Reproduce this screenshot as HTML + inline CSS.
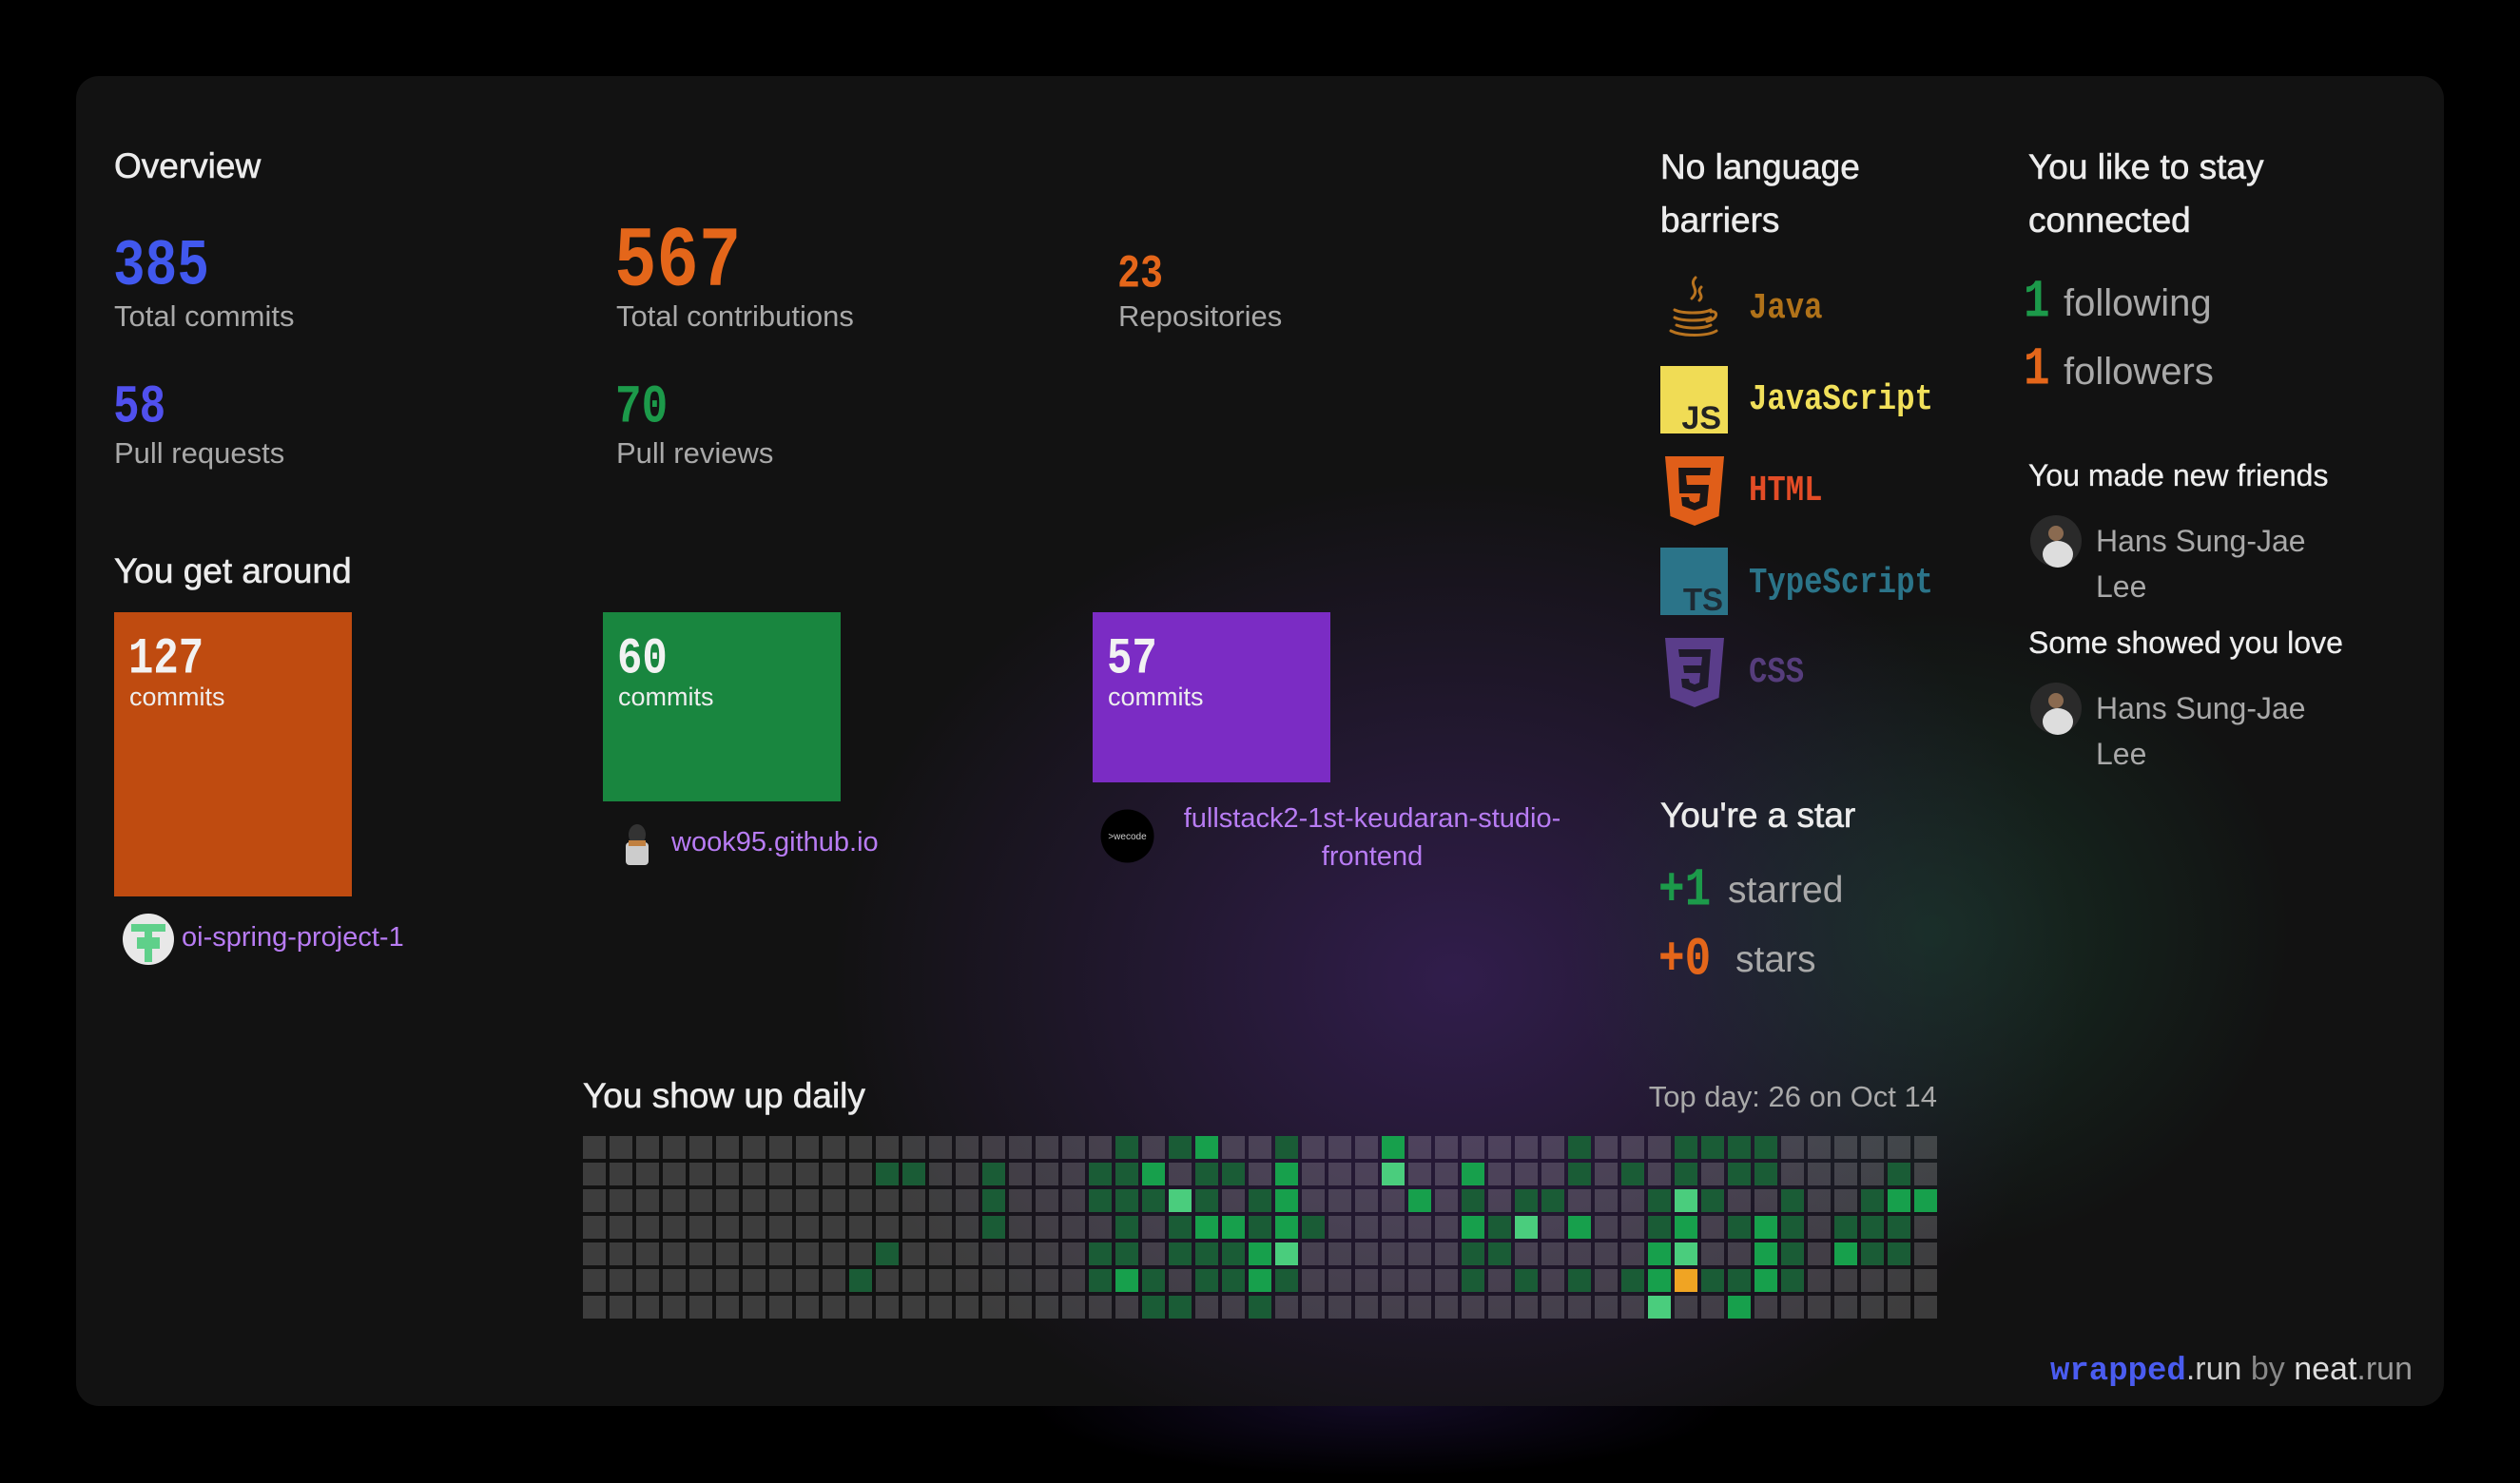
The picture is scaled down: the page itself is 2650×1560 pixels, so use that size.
<!DOCTYPE html>
<html><head><meta charset="utf-8">
<style>
html,body{margin:0;padding:0;width:2650px;height:1560px;overflow:hidden;}
body{background:#000;position:relative;font-family:"Liberation Sans",sans-serif;}
.glowb{position:absolute;left:1050px;top:1420px;width:800px;height:140px;background:radial-gradient(ellipse at 50% 40%,rgba(60,35,120,0.3),rgba(0,0,0,0) 65%);}
.card{position:absolute;left:80px;top:80px;width:2490px;height:1399px;border-radius:24px;background:#121212;overflow:hidden;}
.card .g1{position:absolute;left:700px;top:350px;width:1500px;height:1200px;background:radial-gradient(ellipse at center,rgba(62,34,100,0.7),rgba(18,18,18,0) 62%);}
.card .g2{position:absolute;left:1500px;top:500px;width:900px;height:800px;background:radial-gradient(ellipse at center,rgba(28,72,52,0.5),rgba(18,18,18,0) 60%);}
.t{position:absolute;white-space:nowrap;line-height:1;}
.h{color:#ececec;font-size:37px;-webkit-text-stroke:0.6px #ececec;}
.lbl{color:#a9a9a9;font-size:31px;}
.px{font-family:"Liberation Mono",monospace;font-weight:bold;transform-origin:left 80%;transform:scaleY(1.22);}
.lang{font-family:"Liberation Mono",monospace;font-weight:bold;font-size:38px;transform:scaleX(0.85);transform-origin:left center;}
.bar{position:absolute;}
.repo{color:#b87cf4;font-size:29px;}
.hm rect{width:24px;height:24px;}
.a{fill:#1a5c36}.b{fill:#17a04c}.c{fill:#4acd7d}.d{fill:#f0a423}
</style></head><body>
<div class="glowb"></div>
<div class="card">
<div class="g1"></div><div class="g2"></div>
</div>

<div class="t h" style="left:120px;top:156px;">Overview</div>
<div class="t px" style="left:119px;top:256px;font-size:56px;color:#4158ee;">385</div>
<div class="t lbl" style="left:120px;top:317px;">Total commits</div>
<div class="t px" style="left:646px;top:244px;font-size:74px;color:#e4661a;">567</div>
<div class="t lbl" style="left:648px;top:317px;">Total contributions</div>
<div class="t px" style="left:1175px;top:273px;font-size:40px;color:#e4661a;">23</div>
<div class="t lbl" style="left:1176px;top:317px;">Repositories</div>
<div class="t px" style="left:119px;top:409px;font-size:46px;color:#5050ee;">58</div>
<div class="t lbl" style="left:120px;top:461px;">Pull requests</div>
<div class="t px" style="left:647px;top:409px;font-size:46px;color:#1c9a4a;">70</div>
<div class="t lbl" style="left:648px;top:461px;">Pull reviews</div>

<div class="t h" style="left:120px;top:582px;">You get around</div>
<div class="bar" style="left:120px;top:644px;width:250px;height:299px;background:#bf4b10;"></div>
<div class="t px" style="left:135px;top:675px;font-size:44px;color:#f2f2f2;">127</div>
<div class="t" style="left:136px;top:720px;font-size:27px;color:#eee;">commits</div>
<div class="bar" style="left:634px;top:644px;width:250px;height:199px;background:#19863f;"></div>
<div class="t px" style="left:649px;top:675px;font-size:44px;color:#f2f2f2;">60</div>
<div class="t" style="left:650px;top:720px;font-size:27px;color:#eee;">commits</div>
<div class="bar" style="left:1149px;top:644px;width:250px;height:179px;background:#7b2cc4;"></div>
<div class="t px" style="left:1164px;top:675px;font-size:44px;color:#f2f2f2;">57</div>
<div class="t" style="left:1165px;top:720px;font-size:27px;color:#eee;">commits</div>

<svg style="position:absolute;left:128px;top:960px" width="56" height="56" viewBox="0 0 56 56"><circle cx="28" cy="28" r="27" fill="#e8e8e8"/><path d="M10 12h36v8H32v6h8v12h-8v14h-8V38h-8V26h8v-6H10z" fill="#5fd08a"/></svg>
<div class="t repo" style="left:191px;top:972px;">oi-spring-project-1</div>
<svg style="position:absolute;left:650px;top:866px" width="40" height="46" viewBox="0 0 40 46"><ellipse cx="20" cy="12" rx="9" ry="11" fill="#333"/><rect x="8" y="20" width="24" height="24" rx="4" fill="#ccc"/><rect x="11" y="18" width="18" height="6" fill="#c08040"/></svg>
<div class="t repo" style="left:706px;top:872px;">wook95.github.io</div>
<svg style="position:absolute;left:1157px;top:851px" width="57" height="57" viewBox="0 0 57 57"><circle cx="28.5" cy="28.5" r="28" fill="#000"/><text x="28.5" y="32" font-size="10" fill="#ccc" text-anchor="middle" font-family="Liberation Sans">&gt;wecode</text></svg>
<div class="t repo" style="left:1230px;top:841px;width:426px;text-align:center;line-height:40px;white-space:normal;">fullstack2-1st-keudaran-studio-<br>frontend</div>

<div class="t h" style="left:613px;top:1134px;">You show up daily</div>
<div class="t" style="left:1600px;top:1138px;width:437px;text-align:right;font-size:31px;color:#a9a9a9;">Top day: 26 on Oct 14</div>
<svg class="hm" style="position:absolute;left:613px;top:1195px" width="1424" height="192" viewBox="0 0 1424 192">
<defs><pattern id="p" width="28" height="28" patternUnits="userSpaceOnUse"><rect width="24" height="24" fill="#fff" fill-opacity="0.18"/></pattern></defs>
<rect x="0" y="0" style="width:1424px;height:192px" fill="url(#p)"/>
<g>
<rect class="a" x="560" y="0"/><rect class="a" x="616" y="0"/><rect class="b" x="644" y="0"/><rect class="a" x="728" y="0"/><rect class="b" x="840" y="0"/><rect class="a" x="1036" y="0"/><rect class="a" x="1148" y="0"/><rect class="a" x="1176" y="0"/><rect class="a" x="1204" y="0"/><rect class="a" x="1232" y="0"/>
<rect class="a" x="308" y="28"/><rect class="a" x="336" y="28"/><rect class="a" x="420" y="28"/><rect class="a" x="532" y="28"/><rect class="a" x="560" y="28"/><rect class="b" x="588" y="28"/><rect class="a" x="644" y="28"/><rect class="a" x="672" y="28"/><rect class="b" x="728" y="28"/><rect class="c" x="840" y="28"/><rect class="b" x="924" y="28"/><rect class="a" x="1036" y="28"/><rect class="a" x="1092" y="28"/><rect class="a" x="1148" y="28"/><rect class="a" x="1204" y="28"/><rect class="a" x="1232" y="28"/><rect class="a" x="1372" y="28"/>
<rect class="a" x="420" y="56"/><rect class="a" x="532" y="56"/><rect class="a" x="560" y="56"/><rect class="a" x="588" y="56"/><rect class="c" x="616" y="56"/><rect class="a" x="644" y="56"/><rect class="a" x="700" y="56"/><rect class="b" x="728" y="56"/><rect class="b" x="868" y="56"/><rect class="a" x="924" y="56"/><rect class="a" x="980" y="56"/><rect class="a" x="1008" y="56"/><rect class="a" x="1120" y="56"/><rect class="c" x="1148" y="56"/><rect class="a" x="1176" y="56"/><rect class="a" x="1260" y="56"/><rect class="a" x="1344" y="56"/><rect class="b" x="1372" y="56"/><rect class="b" x="1400" y="56"/>
<rect class="a" x="420" y="84"/><rect class="a" x="560" y="84"/><rect class="a" x="616" y="84"/><rect class="b" x="644" y="84"/><rect class="b" x="672" y="84"/><rect class="a" x="700" y="84"/><rect class="b" x="728" y="84"/><rect class="a" x="756" y="84"/><rect class="b" x="924" y="84"/><rect class="a" x="952" y="84"/><rect class="c" x="980" y="84"/><rect class="b" x="1036" y="84"/><rect class="a" x="1120" y="84"/><rect class="b" x="1148" y="84"/><rect class="a" x="1204" y="84"/><rect class="b" x="1232" y="84"/><rect class="a" x="1260" y="84"/><rect class="a" x="1316" y="84"/><rect class="a" x="1344" y="84"/><rect class="a" x="1372" y="84"/>
<rect class="a" x="308" y="112"/><rect class="a" x="532" y="112"/><rect class="a" x="560" y="112"/><rect class="a" x="616" y="112"/><rect class="a" x="644" y="112"/><rect class="a" x="672" y="112"/><rect class="b" x="700" y="112"/><rect class="c" x="728" y="112"/><rect class="a" x="924" y="112"/><rect class="a" x="952" y="112"/><rect class="b" x="1120" y="112"/><rect class="c" x="1148" y="112"/><rect class="b" x="1232" y="112"/><rect class="a" x="1260" y="112"/><rect class="b" x="1316" y="112"/><rect class="a" x="1344" y="112"/><rect class="a" x="1372" y="112"/>
<rect class="a" x="280" y="140"/><rect class="a" x="532" y="140"/><rect class="b" x="560" y="140"/><rect class="a" x="588" y="140"/><rect class="a" x="644" y="140"/><rect class="a" x="672" y="140"/><rect class="b" x="700" y="140"/><rect class="a" x="728" y="140"/><rect class="a" x="924" y="140"/><rect class="a" x="980" y="140"/><rect class="a" x="1036" y="140"/><rect class="a" x="1092" y="140"/><rect class="b" x="1120" y="140"/><rect class="d" x="1148" y="140"/><rect class="a" x="1176" y="140"/><rect class="a" x="1204" y="140"/><rect class="b" x="1232" y="140"/><rect class="a" x="1260" y="140"/>
<rect class="a" x="588" y="168"/><rect class="a" x="616" y="168"/><rect class="a" x="700" y="168"/><rect class="c" x="1120" y="168"/><rect class="b" x="1204" y="168"/>
</g></svg>

<div class="t h" style="left:1746px;top:148px;line-height:56px;">No language<br>barriers</div>
<svg style="position:absolute;left:1749px;top:290px" width="64" height="70" viewBox="0 0 64 70" fill="none" stroke="#b8731f" stroke-width="3" stroke-linecap="round"><path d="M34 2c-8 8 6 12-4 22M40 12c-6 6 4 8-2 14"/><path d="M12 36c8 4 30 4 38 0M12 44c8 4 30 4 38 0M8 58c12 6 38 6 48 0M14 52c10 4 28 4 36 0M50 38c8-2 8 8-4 10"/></svg>
<div class="t lang" style="left:1839px;top:306px;color:#b07219;">Java</div>
<svg style="position:absolute;left:1746px;top:385px" width="71" height="71" viewBox="0 0 71 71"><rect width="71" height="71" fill="#f0dc55"/><text x="64" y="66" font-family="Liberation Sans" font-weight="bold" font-size="34" fill="#222" text-anchor="end">JS</text></svg>
<div class="t lang" style="left:1839px;top:402px;color:#f1e05a;">JavaScript</div>
<svg style="position:absolute;left:1751px;top:480px" width="62" height="74" viewBox="0 0 62 74"><path d="M0 0h62l-5.5 63L31 73 5.5 63z" fill="#e05e19"/><path d="M14 12h34l-1 8H22l1 10h23l-2 22-13 5-13-5-1-9h8l1 4 5 2 5-2 1-8H15z" fill="#1a1616"/></svg>
<div class="t lang" style="left:1839px;top:498px;color:#e34c26;">HTML</div>
<svg style="position:absolute;left:1746px;top:576px" width="71" height="71" viewBox="0 0 71 71"><rect width="71" height="71" fill="#2b7489"/><text x="66" y="66" font-family="Liberation Sans" font-weight="bold" font-size="33" fill="#1e2a33" text-anchor="end">TS</text></svg>
<div class="t lang" style="left:1839px;top:595px;color:#2b7489;">TypeScript</div>
<svg style="position:absolute;left:1751px;top:671px" width="62" height="74" viewBox="0 0 62 74"><path d="M0 0h62l-5.5 63L31 73 5.5 63z" fill="#5a3d8a"/><path d="M14 12h34l-3 40-14 5-13-5-1-9h8l1 4 5 2 5-2 1-10H20l-1-8h19l1-9H15z" fill="#1f1a2a"/></svg>
<div class="t lang" style="left:1839px;top:689px;color:#563d7c;">CSS</div>

<div class="t h" style="left:1746px;top:839px;">You're a star</div>
<div class="t px" style="left:1744px;top:917px;font-size:46px;color:#1c9a4a;">+1</div>
<div class="t" style="left:1817px;top:917px;font-size:39px;color:#a9a9a9;">starred</div>
<div class="t px" style="left:1744px;top:990px;font-size:46px;color:#e4661a;">+0</div>
<div class="t" style="left:1825px;top:990px;font-size:39px;color:#a9a9a9;">stars</div>

<div class="t h" style="left:2133px;top:148px;line-height:56px;">You like to stay<br>connected</div>
<div class="t px" style="left:2128px;top:298px;font-size:46px;color:#1c9a4a;">1</div>
<div class="t" style="left:2170px;top:299px;font-size:40px;color:#a9a9a9;">following</div>
<div class="t px" style="left:2128px;top:369px;font-size:46px;color:#e4661a;">1</div>
<div class="t" style="left:2170px;top:371px;font-size:40px;color:#a9a9a9;">followers</div>
<div class="t" style="left:2133px;top:484px;font-size:32px;color:#eee;-webkit-text-stroke:0.3px #eee;">You made new friends</div>
<svg style="position:absolute;left:2134px;top:541px" width="56" height="56" viewBox="0 0 56 56"><circle cx="28" cy="28" r="27" fill="#2a2a2a"/><ellipse cx="30" cy="42" rx="16" ry="14" fill="#ddd"/><circle cx="28" cy="20" r="8" fill="#8a6a50"/></svg>
<div class="t" style="left:2204px;top:545px;font-size:32px;color:#a9a9a9;line-height:48px;">Hans Sung-Jae<br>Lee</div>
<div class="t" style="left:2133px;top:660px;font-size:32px;color:#eee;-webkit-text-stroke:0.3px #eee;">Some showed you love</div>
<svg style="position:absolute;left:2134px;top:717px" width="56" height="56" viewBox="0 0 56 56"><circle cx="28" cy="28" r="27" fill="#2a2a2a"/><ellipse cx="30" cy="42" rx="16" ry="14" fill="#ddd"/><circle cx="28" cy="20" r="8" fill="#8a6a50"/></svg>
<div class="t" style="left:2204px;top:721px;font-size:32px;color:#a9a9a9;line-height:48px;">Hans Sung-Jae<br>Lee</div>

<div class="t" style="left:2000px;top:1423px;width:537px;text-align:right;font-size:34px;color:#888;"><span style="font-family:'Liberation Mono',monospace;font-weight:bold;color:#4a5cf0;">wrapped</span><span style="color:#ccc;">.run</span> by <span style="color:#ddd;">neat</span><span style="color:#999;">.run</span></div>
</body></html>
